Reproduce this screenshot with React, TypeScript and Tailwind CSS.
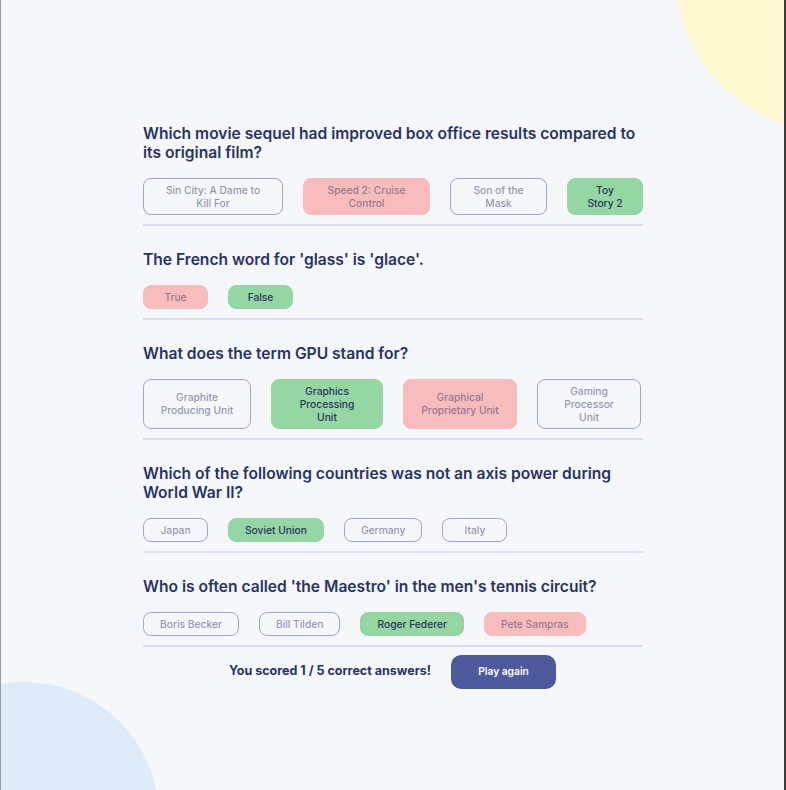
import React from 'react';

type Answer = {
    text: string;
    state: 'correct' | 'wrong' | 'idle';
    extra?: string;
};

type Question = {
    question: string;
    answers: Answer[];
};

const questions: Question[] = [
    {
        question: 'Which movie sequel had improved box office results compared to its original film?',
        answers: [
            { text: 'Sin City: A Dame to Kill For', state: 'idle', extra: 'w-[140px]' },
            { text: 'Speed 2: Cruise Control', state: 'wrong', extra: 'w-[127px]' },
            { text: 'Son of the Mask', state: 'idle', extra: 'w-[97px]' },
            { text: 'Toy Story 2', state: 'correct', extra: 'w-[76px]' },
        ],
    },
    {
        question: "The French word for 'glass' is 'glace'.",
        answers: [
            { text: 'True', state: 'wrong' },
            { text: 'False', state: 'correct' },
        ],
    },
    {
        question: 'What does the term GPU stand for?',
        answers: [
            { text: 'Graphite Producing Unit', state: 'idle', extra: 'w-[108px]' },
            { text: 'Graphics Processing Unit', state: 'correct', extra: 'w-[112px] px-[20px]' },
            { text: 'Graphical Proprietary Unit', state: 'wrong', extra: 'w-[114px]' },
            { text: 'Gaming Processor Unit', state: 'idle', extra: 'w-[104px]' },
        ],
    },
    {
        question: 'Which of the following countries was not an axis power during World War II?',
        answers: [
            { text: 'Japan', state: 'idle' },
            { text: 'Soviet Union', state: 'correct' },
            { text: 'Germany', state: 'idle' },
            { text: 'Italy', state: 'idle' },
        ],
    },
    {
        question: "Who is often called 'the Maestro' in the men's tennis circuit?",
        answers: [
            { text: 'Boris Becker', state: 'idle' },
            { text: 'Bill Tilden', state: 'idle' },
            { text: 'Roger Federer', state: 'correct' },
            { text: 'Pete Sampras', state: 'wrong' },
        ],
    },
];

// Estilo de cada botón según si era la correcta, la elegida mal, o ninguna
const answerClasses = (state: Answer['state']) => {
    if (state === 'correct') return 'bg-[#94D7A2] border-[#94D7A2] text-[#293264]';
    if (state === 'wrong') return 'bg-[#F8BCBC] border-[#F8BCBC] text-[#293264]/50';
    return 'bg-transparent border-[#4D5B9E]/50 text-[#293264]/50';
};

const AnswerButton: React.FC<{ answer: Answer }> = ({ answer }) => (
    <button
        className={`${answerClasses(answer.state)} shrink-0 min-w-[65px] border rounded-[8px] px-[16px] py-[4.5px] text-[10.24px] leading-[13px] font-medium text-center ${answer.extra ?? ''}`}
    >
        {answer.text}
    </button>
);

const QuestionBlock: React.FC<{ item: Question }> = ({ item }) => (
    <div className="flex flex-col">
        <h2 className="text-[15.6px] leading-[19px] font-semibold text-[#293264]">{item.question}</h2>
        <div className="flex gap-5 mt-4">
            {item.answers.map((a) => (
                <AnswerButton key={a.text} answer={a} />
            ))}
        </div>
        <div className="mt-[9px] h-[1.5px] bg-[#DBDEF0]"></div>
    </div>
);

export default function App() {
    return (
        <div
            className="relative w-[786px] h-[790px] overflow-hidden bg-[#F5F7FB] border-l border-l-[#9c9c9c] border-r-2 border-r-[#3a3a3a]"
            style={{ fontFamily: '"Inter", "Noto Sans", sans-serif' }}
        >
            <div className="absolute left-[673px] top-[-191px] w-[324px] h-[324px] rounded-full bg-[#FFFAD1]"></div>
            <div className="absolute left-[-112px] top-[682px] w-[270px] h-[280px] rounded-full bg-[#DEEBF8]"></div>

            <div className="relative w-[500px] ml-[142px] pt-[124px] flex flex-col gap-[24.5px]">
                {questions.map((q) => (
                    <QuestionBlock key={q.question} item={q} />
                ))}
            </div>
            <div className="relative flex items-center justify-center gap-5 mt-[8px]">
                <p className="text-[12.5px] font-bold text-[#293264]">You scored 1 / 5 correct answers!</p>
                <button className="w-[105px] h-[34px] rounded-[10px] bg-[#4D5B9E] text-white text-[10.24px] font-semibold">
                    Play again
                </button>
            </div>
        </div>
    );
}
